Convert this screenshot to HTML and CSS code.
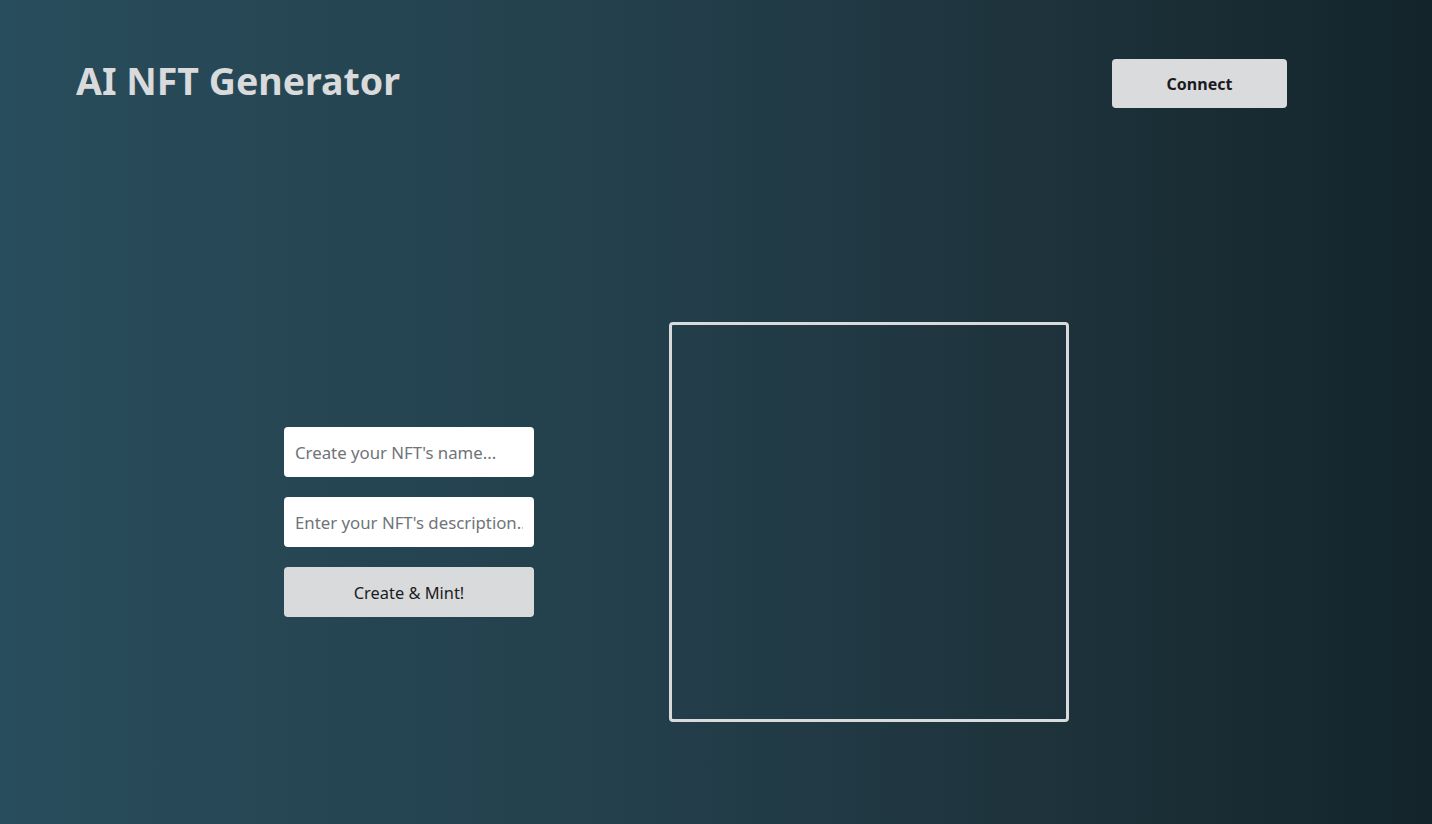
FILE: index.html
```html
<!DOCTYPE html>
<html lang="en">
<head>
<meta charset="utf-8">
<title>AI NFT Generator</title>
<link rel="stylesheet" href="styles.css">
</head>
<body>
<div class="app">
  <header class="header">
    <h1 class="title">AI NFT Generator</h1>
    <button class="connect">Connect</button>
  </header>
  <main class="form-area">
    <form class="form">
      <input class="field" type="text" placeholder="Create your NFT's name...">
      <input class="field" type="text" placeholder="Enter your NFT's description...">
      <button class="mint" type="button">Create &amp; Mint!</button>
    </form>
    <div class="image-box"></div>
  </main>
</div>
</body>
</html>
```
FILE: styles.css
```css
* { box-sizing: border-box; }
html, body { margin: 0; padding: 0; height: 100%; }
body {
  font-family: "Noto Sans", "Open Sans", sans-serif;
  background: linear-gradient(to right, #284d5c 0%, #274856 15%, #233f4b 45%, #1e333c 72%, #13242b 100%);
  color: #d9dadc;
}
.app {
  min-height: 824px;
  display: flex;
  flex-direction: column;
}
.header {
  display: flex;
  justify-content: space-between;
  align-items: flex-start;
  padding: 59px 145px 0 76px;
  height: 322px;
}
.title {
  margin: 0;
  font-size: 37.5px;
  font-weight: 700;
  line-height: 44px;
  color: #d9dadc;
}
.connect {
  width: 175px;
  height: 49px;
  border: none;
  border-radius: 4px;
  background: #dadbdd;
  color: #1a1a1f;
  font-family: inherit;
  font-size: 16px;
  font-weight: 700;
  cursor: pointer;
}
.form-area {
  display: flex;
  align-items: center;
  padding-left: 284px;
  gap: 135px;
}
.form {
  display: flex;
  flex-direction: column;
  gap: 20px;
  width: 250px;
}
.field {
  height: 50px;
  width: 250px;
  border: none;
  border-radius: 4px;
  background: #ffffff;
  padding: 0 11px;
  font-family: inherit;
  font-size: 16.8px;
  color: #222;
  outline: none;
}
.field::placeholder { color: #6f7479; }
.mint {
  height: 50px;
  width: 250px;
  border: none;
  border-radius: 4px;
  background: #d9dadc;
  color: #1c1c20;
  font-family: inherit;
  font-size: 16.4px;
  cursor: pointer;
}
.image-box {
  width: 400px;
  height: 400px;
  border: 3px solid #d9dadc;
  border-radius: 4px;
}
```
